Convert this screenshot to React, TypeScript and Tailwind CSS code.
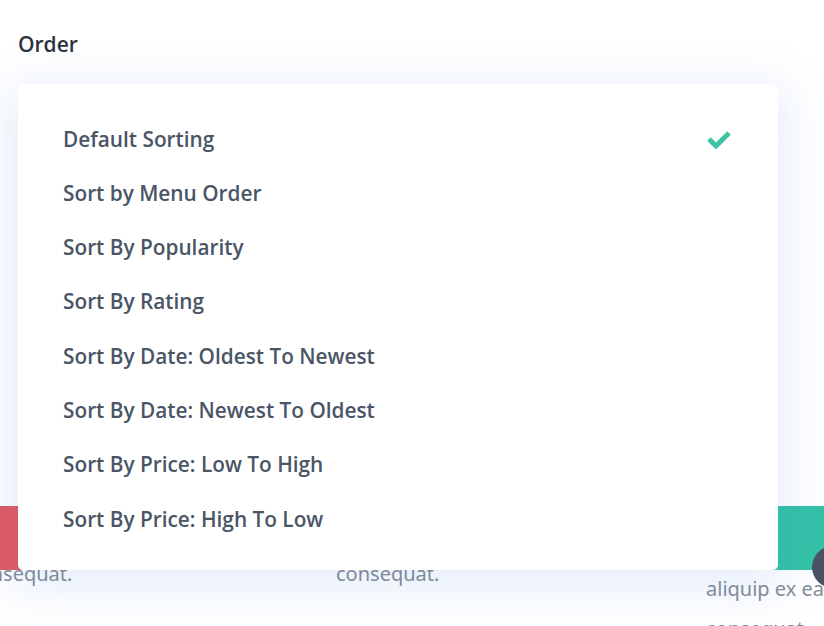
const options = [
  "Default Sorting",
  "Sort by Menu Order",
  "Sort By Popularity",
  "Sort By Rating",
  "Sort By Date: Oldest To Newest",
  "Sort By Date: Newest To Oldest",
  "Sort By Price: Low To High",
  "Sort By Price: High To Low",
];

function CheckMark() {
  return (
    <svg width="26" height="20" viewBox="0 0 26 20" className="text-[#3cc4a5]">
      <path d="M3 10 L10 17 L23 4" fill="none" stroke="currentColor" strokeWidth="5" />
    </svg>
  );
}

export default function App() {
  return (
    <div className="relative w-[824px] h-[626px] overflow-hidden bg-white font-['Open_Sans',sans-serif]">
      <div className="pl-[18px] pt-[28px] h-[506px]">
        <p className="text-[21px] font-semibold text-[#2c333e] leading-[32px]">Order</p>
      </div>

      {/* cards behind the menu */}
      <div className="flex gap-[20px] ml-[-31px] font-['Noto_Sans',sans-serif] text-[20px] text-[#858c96]">
        <div className="w-[347px] shrink-0">
          <div className="h-[64px] bg-[#e35962]" />
          <p className="leading-[20px] mt-[-6px]">consequat.</p>
        </div>
        <div className="w-[350px] shrink-0">
          <div className="h-[64px]" />
          <p className="leading-[20px] mt-[-6px]">consequat.</p>
        </div>
        <div className="w-[300px] shrink-0">
          <div className="h-[64px] bg-[#34c2a6]" />
          <p className="leading-[40px] mt-[-1px]">aliquip ex ea commodo</p>
          <p className="leading-[40px]">consequat.</p>
        </div>
      </div>

      <div className="absolute left-[812px] top-[546px] w-[42px] h-[42px] rounded-full bg-[#4a5262]" />

      {/* dropdown */}
      <div className="absolute left-[18px] top-[84px] w-[760px] h-[486px] rounded-[5px] bg-white pt-[28px] pl-[45px] pr-[46px] shadow-[0_10px_50px_10px_rgba(60,120,220,0.13)]">
        {options.map((label, i) => (
          <div key={label} className="h-[54.3px] flex items-center justify-between">
            <span className="text-[20.8px] font-semibold text-[#4a5566]">{label}</span>
            {i === 0 && <CheckMark />}
          </div>
        ))}
      </div>
    </div>
  );
}
